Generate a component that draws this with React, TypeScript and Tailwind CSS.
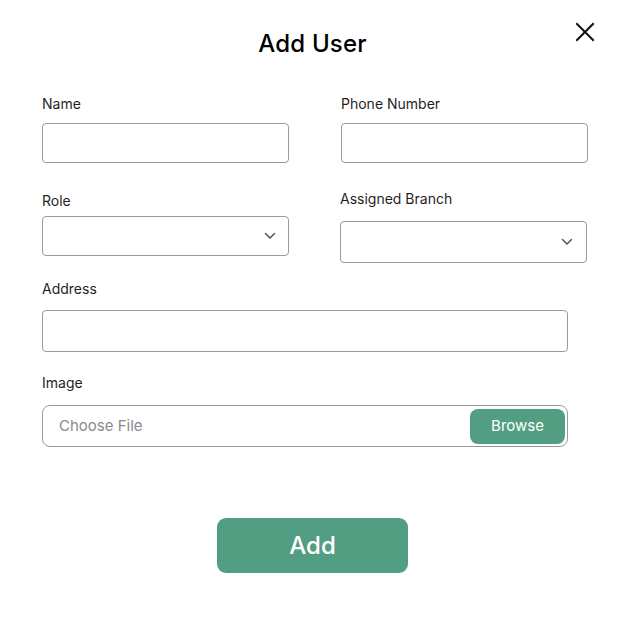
import { FC } from 'react';

const Chevron: FC = () => (
  <svg width="12" height="8" viewBox="0 0 12 8" fill="none" className="text-gray-600">
    <path d="M1.5 1.5L6 6L10.5 1.5" stroke="currentColor" strokeWidth="1.5" strokeLinecap="round" strokeLinejoin="round" />
  </svg>
);

const Label: FC<{ text: string; className?: string }> = ({ text, className = '' }) => (
  <label className={`block text-[14px] leading-5 text-[#1f1f1f] ${className}`}>{text}</label>
);

const TextBox: FC<{ className?: string }> = ({ className = '' }) => (
  <input type="text" className={`block w-full rounded-[4px] border border-[#9a9a9a] bg-white px-3 outline-none ${className}`} />
);

const SelectBox: FC<{ className?: string }> = ({ className = '' }) => (
  <div className={`flex w-full items-center justify-end rounded-[4px] border border-[#9a9a9a] bg-white pr-3 ${className}`}>
    <Chevron />
  </div>
);

const App: FC = () => {
  return (
    <div className="relative h-[622px] w-[625px] bg-white font-['Inter','Noto_Sans',sans-serif] text-black">
      <button className="absolute left-[575px] top-[22px] p-0" aria-label="Close">
        <svg width="20" height="20" viewBox="0 0 20 20" fill="none">
          <path d="M2 2L18 18M18 2L2 18" stroke="#111" strokeWidth="2" strokeLinecap="square" />
        </svg>
      </button>

      <div className="pl-[42px] pt-[28px]">
        <h2 className="mr-[42px] text-center text-[24px] font-medium leading-8 tracking-[0.2px]">Add User</h2>

        <div className="mt-[34px] flex gap-[52px]">
          <div className="w-[247px] shrink-0">
            <Label text="Name" />
            <TextBox className="mt-[9px] h-[40px]" />
            <Label text="Role" className="mt-[28px]" />
            <SelectBox className="mt-[5px] h-[40px]" />
          </div>
          <div className="w-[247px] shrink-0">
            <Label text="Phone Number" />
            <TextBox className="mt-[9px] h-[40px]" />
            <Label text="Assigned Branch" className="mt-[26px] -ml-px" />
            <SelectBox className="-ml-px mt-[12px] h-[42px] pr-[13px]" />
          </div>
        </div>

        <Label text="Address" className="mt-[16px]" />
        <TextBox className="mt-[11px] h-[42px] !w-[526px]" />

        <Label text="Image" className="mt-[21px]" />
        <div className="mt-[12px] flex h-[42px] w-[526px] items-center justify-between rounded-[8px] border border-[#9a9a9a] pl-[16px] pr-[2px]">
          <span className="text-[15px] text-[#8a8a8a]">Choose File</span>
          <button className="flex h-[35px] w-[95px] items-center justify-center rounded-[8px] bg-[#529e82] text-[15px] text-white">
            Browse
          </button>
        </div>

        <div className="mr-[42px] mt-[71px] flex justify-center">
          <button className="h-[55px] w-[191px] rounded-[9px] bg-[#529e82] text-[24px] font-medium text-white">
            Add
          </button>
        </div>
      </div>
    </div>
  );
};

export default App;
